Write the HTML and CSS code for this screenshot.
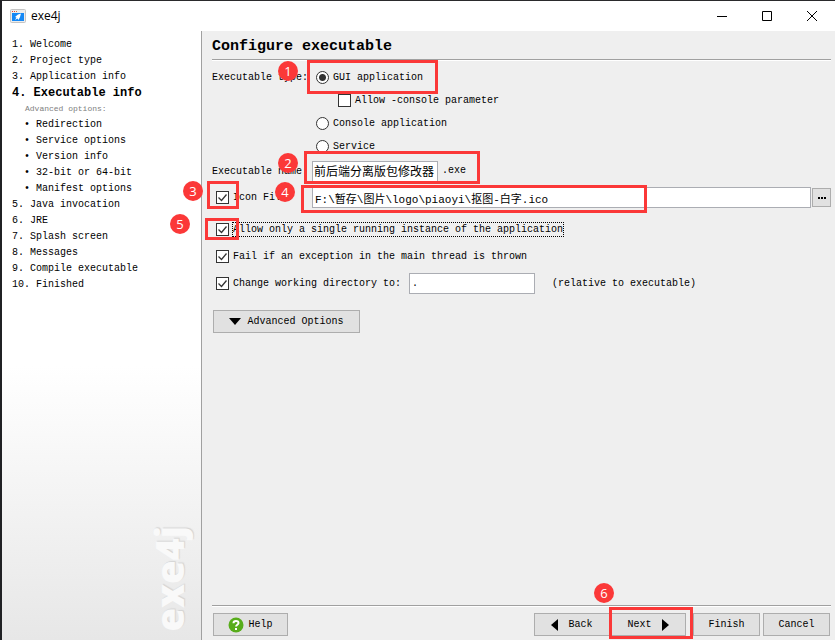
FILE: index.html
```html
<!DOCTYPE html>
<html lang="en">

<head>
  <meta charset="UTF-8">
  <meta name="viewport" content="width=device-width, initial-scale=1.0">
  <title>exe4j</title>
  <link rel="stylesheet" href="styles.css">
</head>

<body>
  <div class="window">
    <header class="titlebar">
      <svg class="app-icon" width="16" height="14" viewBox="0 0 16 14">
        <rect x="0.5" y="0.5" width="15" height="13" rx="1" fill="#ececec" stroke="#c4c4c4"/>
        <rect x="2" y="2" width="1" height="1" fill="#e8442c"/>
        <rect x="4" y="2" width="1" height="1" fill="#e8442c"/>
        <rect x="6" y="2" width="1" height="1" fill="#e8702c"/>
        <rect x="2" y="4" width="12" height="8" fill="#1588f5"/>
        <path d="M11 4.500L8 5.500 5 8l1.500.5L5 11l2.500-1.500L8.500 11 10 8z" fill="#fff"/>
      </svg>
      <span class="app-name">exe4j</span>
      <div class="window-buttons">
        <button type="button" aria-label="Minimize"><svg width="11" height="11" viewBox="0 0 11 11"><path d="M0 5.500h10"/></svg></button>
        <button type="button" aria-label="Maximize"><svg width="11" height="11" viewBox="0 0 11 11"><path d="M.5.5h9v9h-9z"/></svg></button>
        <button type="button" aria-label="Close"><svg width="11" height="11" viewBox="0 0 11 11"><path d="M0 0l10 10M10 0L0 10"/></svg></button>
      </div>
    </header>

    <div class="content">
      <nav class="sidebar">
        <ul class="steps">
          <li>1. Welcome</li>
          <li>2. Project type</li>
          <li>3. Application info</li>
          <li class="current">4. Executable info</li>
          <li>
            <div class="sub-title">Advanced options:</div>
            <ul class="sub-steps">
              <li>• Redirection</li>
              <li>• Service options</li>
              <li>• Version info</li>
              <li>• 32-bit or 64-bit</li>
              <li>• Manifest options</li>
            </ul>
          </li>
          <li>5. Java invocation</li>
          <li>6. JRE</li>
          <li>7. Splash screen</li>
          <li>8. Messages</li>
          <li>9. Compile executable</li>
          <li>10. Finished</li>
        </ul>
        <div class="watermark">exe4j</div>
      </nav>

      <main class="main">
        <h1>Configure executable</h1>

        <form class="form">
          <div class="type-row">
            <span class="row-label">Executable type:</span>
            <div class="options">
              <label class="option"><input type="radio" name="type" checked>GUI application</label>
              <label class="option indent"><input type="checkbox">Allow -console parameter</label>
              <label class="option"><input type="radio" name="type">Console application</label>
              <label class="option"><input type="radio" name="type">Service</label>
            </div>
          </div>

          <div class="row name-row">
            <label class="row-label" for="exe-name">Executable name:</label>
            <input type="text" class="text-input name-input" id="exe-name" value="前后端分离版包修改器">
            <span class="suffix">.exe</span>
          </div>

          <div class="row icon-row">
            <label class="row-label check"><input type="checkbox" checked>Icon File:</label>
            <input type="text" class="text-input path-input" aria-label="Icon file" value="F:\暂存\图片\logo\piaoyi\抠图-白字.ico">
            <button type="button" class="btn browse" aria-label="Browse"><svg width="8" height="2" viewBox="0 0 8 2"><path d="M0 0h2v2H0zM3 0h2v2H3zM6 0h2v2H6z"/></svg></button>
          </div>

          <div class="checks">
            <label class="row check"><input type="checkbox" checked><span class="focused">Allow only a single running instance of the application</span></label>
            <label class="row check"><input type="checkbox" checked>Fail if an exception in the main thread is thrown</label>
            <div class="row">
              <label class="check"><input type="checkbox" checked>Change working directory to:</label>
              <input type="text" class="text-input dir-input" aria-label="Working directory" value=".">
              <span class="hint">(relative to executable)</span>
            </div>
          </div>

          <button type="button" class="btn advanced"><svg width="12" height="7" viewBox="0 0 12 7"><path d="M0 0h12L6 7z"/></svg>Advanced Options</button>
        </form>

        <footer class="footer">
          <button type="button" class="btn help">
            <svg width="16" height="16" viewBox="0 0 16 16">
              <circle cx="8" cy="8" r="7.500" fill="#58ad1c"/>
              <path d="M5.500 6.200C5.500 3.200 10.500 3.200 10.500 6c0 1.800-2.400 1.800-2.400 3.600" fill="none" stroke="#fff" stroke-width="2"/>
              <rect x="7" y="11" width="2" height="2" fill="#fff"/>
            </svg>Help
          </button>
          <div class="nav-buttons">
            <button type="button" class="btn step"><svg width="7" height="12" viewBox="0 0 7 12"><path d="M7 0v12L0 6z"/></svg>Back</button>
            <button type="button" class="btn step">Next<svg width="7" height="12" viewBox="0 0 7 12"><path d="M0 0v12l7-6z"/></svg></button>
          </div>
          <button type="button" class="btn end">Finish</button>
          <button type="button" class="btn end">Cancel</button>
        </footer>
      </main>
    </div>
  </div>

  <!-- numbered callouts -->
  <div class="box box-1"></div>
  <div class="box box-2"></div>
  <div class="box box-3"></div>
  <div class="box box-4"></div>
  <div class="box box-5"></div>
  <div class="box box-6"></div>
  <span class="badge badge-1">1</span>
  <span class="badge badge-2">2</span>
  <span class="badge badge-3">3</span>
  <span class="badge badge-4">4</span>
  <span class="badge badge-5">5</span>
  <span class="badge badge-6">6</span>
</body>

</html>
```
FILE: styles.css
```css
:root {
  --panel: #efefef;
  --line: #a0a0a0;
  --field-border: #abadb3;
  --mark: #fb3838;
}

* {
  margin: 0;
  padding: 0;
  box-sizing: border-box;
}

body {
  position: relative;
  min-height: 100vh;
  font-family: "Liberation Mono", "Noto Sans CJK SC", monospace;
  font-size: 10px;
  line-height: 16px;
  color: #000;
  background: #202124;
}

button,
input {
  font: inherit;
  color: inherit;
}

.window {
  display: flex;
  flex-direction: column;
  min-height: 100vh;
  border-top: 1px solid #2a2a2c;
  border-left: 2px solid #202124;
  background: #fff;
}

/* title bar */
.titlebar {
  display: flex;
  align-items: center;
  height: 30px;
  padding-left: 8px;
}

.app-name {
  margin-left: 5px;
  font-family: "Open Sans", sans-serif;
  font-size: 12px;
}

.window-buttons {
  display: flex;
  margin-left: auto;
}

.window-buttons button {
  display: flex;
  align-items: center;
  justify-content: center;
  width: 45px;
  height: 29px;
  border: none;
  background: none;
}

.window-buttons path {
  fill: none;
  stroke: #000;
}

.content {
  display: flex;
  flex: 1;
}

/* sidebar */
.sidebar {
  display: flex;
  flex-direction: column;
  width: 200px;
  padding: 6px 12px 8px 10px;
  border-right: 1px solid var(--line);
  background: linear-gradient(#fff 55%, #e7e7e7);
}

ul {
  list-style: none;
}

.current {
  font-size: 12px;
  font-weight: bold;
}

.sub-title {
  padding-left: 13px;
  font-size: 8px;
  color: #808080;
}

.sub-steps {
  padding-left: 12px;
}

.watermark {
  align-self: flex-end;
  margin-top: auto;
  writing-mode: vertical-rl;
  transform: rotate(180deg);
  font-family: "Open Sans", sans-serif;
  font-size: 38px;
  font-weight: 800;
  line-height: 40px;
  color: #f9f9f9;
  text-shadow: 1px 1px 1px #d4d4d4;
}

/* main panel */
.main {
  display: flex;
  flex: 1;
  flex-direction: column;
  padding: 0 4px 4px 10px;
  background: var(--panel);
}

h1 {
  height: 29px;
  border-bottom: 1px solid var(--line);
  box-shadow: 0 1px #fff;
  font-size: 15px;
  line-height: 32px;
}

.form {
  flex: 1;
  padding-top: 6px;
}

.type-row {
  display: flex;
}

.row-label {
  flex: none;
  width: 100px;
  line-height: 23px;
}

.options {
  padding-left: 4px;
}

.option {
  display: flex;
  align-items: center;
  gap: 4px;
  height: 23px;
}

.indent {
  padding-left: 22px;
}

.row {
  display: flex;
  align-items: center;
  height: 27px;
}

.name-row {
  height: 26px;
}

.check {
  display: flex;
  align-items: center;
  gap: 4px;
  padding-left: 4px;
}

.checks {
  margin-top: 5px;
}

input[type="radio"],
input[type="checkbox"] {
  flex: none;
  width: 13px;
  height: 13px;
  border: 1px solid #333;
  background: #fff;
  appearance: none;
}

input[type="radio"] {
  border-radius: 50%;
}

input[type="radio"]:checked {
  background: radial-gradient(circle, #333 3px, #fff 4px);
}

input[type="checkbox"]:checked {
  background: #fff url("data:image/svg+xml,%3Csvg xmlns='http://www.w3.org/2000/svg' viewBox='0 0 11 11'%3E%3Cpath d='M1.500 5.500l3 3 5-6' fill='none' stroke='%23333' stroke-width='1.300'/%3E%3C/svg%3E");
}

.text-input {
  height: 21px;
  padding: 0 2px;
  border: 1px solid var(--field-border);
  background: #fff;
}

.name-input {
  width: 126px;
  padding: 0 1px;
  font-size: 12px;
}

.path-input {
  flex: 1;
  font-size: 11px;
}

.dir-input {
  width: 126px;
  margin-left: 8px;
}

.suffix {
  margin-left: 4px;
}

.hint {
  margin-left: 17px;
}

.focused {
  outline: 1px dotted #000;
  line-height: 13px;
}

.btn {
  display: flex;
  align-items: center;
  justify-content: center;
  height: 23px;
  border: 1px solid #adadad;
  background: #e1e1e1;
}

.browse {
  width: 19px;
  height: 19px;
  margin-left: 1px;
}

.advanced {
  gap: 6px;
  width: 147px;
  margin: 13px 0 0 1px;
}

/* bottom buttons */
.footer {
  display: flex;
  gap: 3px;
  padding: 7px 1px 0;
  border-top: 1px solid var(--line);
  box-shadow: inset 0 1px #fff;
}

.help {
  gap: 4px;
  width: 75px;
}

.nav-buttons {
  display: flex;
  margin: 0 4px 0 auto;
}

.step {
  gap: 10px;
  width: 76px;
}

.end {
  width: 67px;
}

/* callouts */
.box {
  position: absolute;
  border: 3px solid var(--mark);
  pointer-events: none;
}

.badge {
  position: absolute;
  width: 20px;
  height: 20px;
  border-radius: 50%;
  background: var(--mark);
  color: #fff;
  font-family: "Open Sans", sans-serif;
  font-size: 13px;
  line-height: 20px;
  text-align: center;
}

.box-1 { left: 307px; top: 60px; width: 131px; height: 34px; }
.box-2 { left: 304px; top: 151px; width: 176px; height: 33px; }
.box-3 { left: 207px; top: 181px; width: 32px; height: 28px; }
.box-4 { left: 301px; top: 185px; width: 346px; height: 28px; }
.box-5 { left: 205px; top: 218px; width: 34px; height: 22px; }
.box-6 { right: 142px; bottom: 1px; width: 84px; height: 32px; }

.badge-1 { left: 278px; top: 61px; }
.badge-2 { left: 278px; top: 153px; }
.badge-3 { left: 183px; top: 181px; }
.badge-4 { left: 275px; top: 182px; }
.badge-5 { left: 170px; top: 214px; }
.badge-6 { right: 221px; bottom: 37px; }
```
